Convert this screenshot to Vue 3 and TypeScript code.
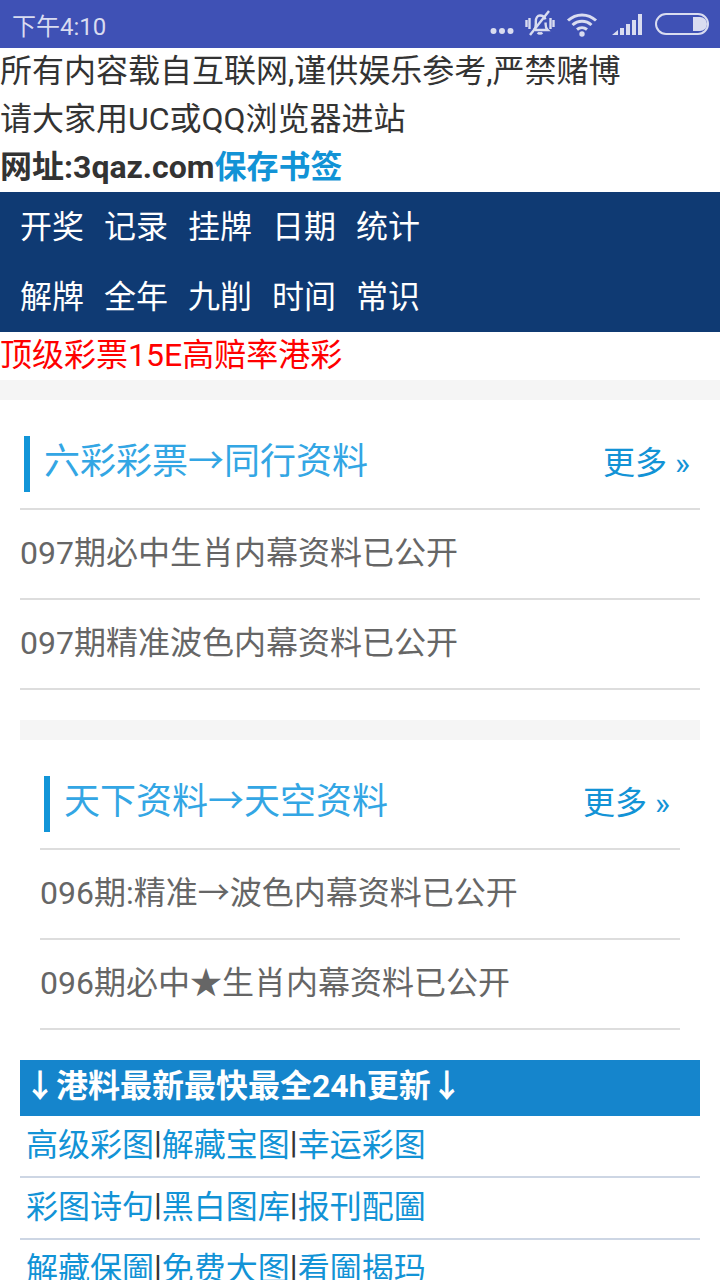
<script setup lang="ts">
interface Section {
  title: string
  rows: string[]
}

const navRows = [
  ['开奖', '记录', '挂牌', '日期', '统计'],
  ['解牌', '全年', '九削', '时间', '常识']
]

const first: Section = {
  title: '六彩彩票→同行资料',
  rows: ['097期必中生肖内幕资料已公开', '097期精准波色内幕资料已公开']
}

const second: Section = {
  title: '天下资料→天空资料',
  rows: ['096期:精准→波色内幕资料已公开', '096期必中★生肖内幕资料已公开']
}

const linkRows = [
  ['高级彩图', '解藏宝图', '幸运彩图'],
  ['彩图诗句', '黑白图库', '报刊配圗'],
  ['解藏保圗', '免费大图', '看圗揭玛']
]
</script>

<template>
  <div class="page">
    <div class="status">
      <span class="time">下午4:10</span>
      <div class="status-icons">
        <svg width="24" height="8" viewBox="0 0 24 8" class="dots">
          <circle cx="3.5" cy="4" r="3" />
          <circle cx="12" cy="4" r="3" />
          <circle cx="20.5" cy="4" r="3" />
        </svg>
        <svg width="30" height="30" viewBox="0 0 30 30" class="mute">
          <path d="M9 21c1.5-1.500 1.800-3 1.800-6v-2.500C10.800 9 12.500 6.500 15 6.500s4.600 1.500 5.400 3.800M20.600 13.500V15c0 3 .4 4.500 2 6H10" />
          <path d="M12.800 23.500c.8 1.300 3.600 1.300 4.400 0" />
          <path d="M1.500 11v7M4.500 9v11M25.500 9v11M28.500 11v7" />
          <path d="M5 26 24 2" />
        </svg>
        <svg width="32" height="26" viewBox="0 0 32 26" class="wifi">
          <path d="M2 9.500C10 2 22 2 30 9.500" />
          <path d="M6.500 14C12 9 20 9 25.500 14" />
          <path d="M11 18.500c3-2.500 7-2.500 10 0" />
          <circle cx="16" cy="23" r="2.700" />
        </svg>
        <svg width="30" height="22" viewBox="0 0 30 22" class="signal">
          <path d="M0 21 6 16v5zM8 14h4v7H8zM14 10h4v11h-4zM20 6h4v15h-4zM26 0h4v21h-4z" />
        </svg>
        <svg width="54" height="22" viewBox="0 0 54 22" class="battery">
          <rect x="1" y="1" width="52" height="20" rx="10" class="shell" />
          <path d="M38 4h7a7 7 0 0 1 0 14h-7z" />
        </svg>
      </div>
    </div>

    <div class="notice">
      <p>所有内容载自互联网,谨供娱乐参考,严禁赌博</p>
      <p>请大家用UC或QQ浏览器进站</p>
      <p class="site">网址:3qaz.com<a>保存书签</a></p>
    </div>

    <nav class="nav">
      <div v-for="(row, i) in navRows" :key="i" class="nav-row">
        <a v-for="item in row" :key="item">{{ item }}</a>
      </div>
    </nav>

    <p class="promo">顶级彩票15E高赔率港彩</p>
    <div class="band"></div>

    <section class="news">
      <div class="news-head">
        <h2>{{ first.title }}</h2>
        <a class="more">更多 <i>»</i></a>
      </div>
      <div v-for="row in first.rows" :key="row" class="news-row">{{ row }}</div>
    </section>

    <div class="band inset"></div>

    <section class="news nested">
      <div class="news-head">
        <h2>{{ second.title }}</h2>
        <a class="more">更多 <i>»</i></a>
      </div>
      <div v-for="row in second.rows" :key="row" class="news-row">{{ row }}</div>
    </section>

    <div class="links">
      <div class="links-title">↓港料最新最快最全24h更新↓</div>
      <div v-for="(row, i) in linkRows" :key="i" class="link-row">
        <template v-for="(link, j) in row" :key="link">
          <span v-if="j > 0" class="sep">|</span>
          <a>{{ link }}</a>
        </template>
      </div>
    </div>
  </div>
</template>

<style>
html,
body {
  margin: 0;
  background: #fff;
}
</style>

<style scoped>
.page {
  width: 720px;
  height: 1280px;
  overflow: hidden;
  background: #fff;
  font-family: Roboto, "Noto Sans CJK SC", sans-serif;
  font-size: 32px;
  color: #333;
}

p {
  margin: 0;
}

.status {
  height: 48px;
  display: flex;
  align-items: center;
  justify-content: space-between;
  padding: 0 11px 0 12px;
  background: #3f51b5;
  color: #d9dcf0;
}

.time {
  font-size: 24px;
}

.status-icons {
  display: flex;
  align-items: center;
}

.status-icons svg {
  display: block;
  fill: #d9dcf0;
}

.dots {
  margin: 14px 11px 0 0;
}

.mute,
.wifi {
  fill: none !important;
  stroke: #d9dcf0;
  stroke-width: 2.400;
}

.mute {
  margin-right: 12px;
}

.wifi {
  stroke-width: 3;
  margin-right: 14px;
  margin-left: -1px;
}

.wifi circle {
  fill: #d9dcf0;
  stroke: none;
}

.signal {
  margin: 2px 13px 0 0;
}

.battery .shell {
  fill: none;
  stroke: #d9dcf0;
  stroke-width: 2;
}

.notice p {
  line-height: 46px;
  height: 48px;
}

.site {
  font-weight: 700;
}

.site a {
  color: #1293d6;
}

.nav {
  height: 140px;
  padding: 0 10px;
  background: #0f3a73;
}

.nav-row {
  display: flex;
  height: 70px;
  box-sizing: border-box;
  padding-bottom: 6px;
  align-items: center;
}

.nav-row a {
  padding: 0 10px;
  color: #fff;
}

.promo {
  height: 48px;
  line-height: 46px;
  color: #f00;
}

.band {
  height: 20px;
  background: #f5f5f5;
}

.band.inset {
  margin: 30px 20px 0;
}

.news {
  margin: 0 20px;
}

.news.nested {
  margin: 0 40px;
}

.news-head {
  display: flex;
  align-items: center;
  justify-content: space-between;
  height: 110px;
  box-sizing: border-box;
  padding: 0 10px 0 4px;
  border-bottom: 2px solid #ddd;
}

.news-head h2 {
  margin: 20px 0 0;
  height: 56px;
  padding-left: 14px;
  border-left: 6px solid #1295d8;
  font-size: 36px;
  font-weight: 400;
  line-height: 52px;
  color: #33a6e4;
}

.more {
  margin-top: 12px;
  color: #1293d6;
}

.more i {
  font-style: normal;
}

.news-row {
  height: 90px;
  box-sizing: border-box;
  line-height: 86px;
  border-bottom: 2px solid #ddd;
  color: #666;
}

.links {
  margin: 30px 20px 0;
}

.links-title {
  height: 56px;
  padding-left: 4px;
  background: #1585cc;
  color: #fff;
  font-weight: 700;
  line-height: 52px;
}

.link-row {
  display: flex;
  align-items: center;
  height: 62px;
  box-sizing: border-box;
  padding: 0 0 8px 6px;
  border-bottom: 2px solid #cdd6e4;
}

.link-row a {
  color: #1293d6;
}

.sep {
  color: #333;
}
</style>
